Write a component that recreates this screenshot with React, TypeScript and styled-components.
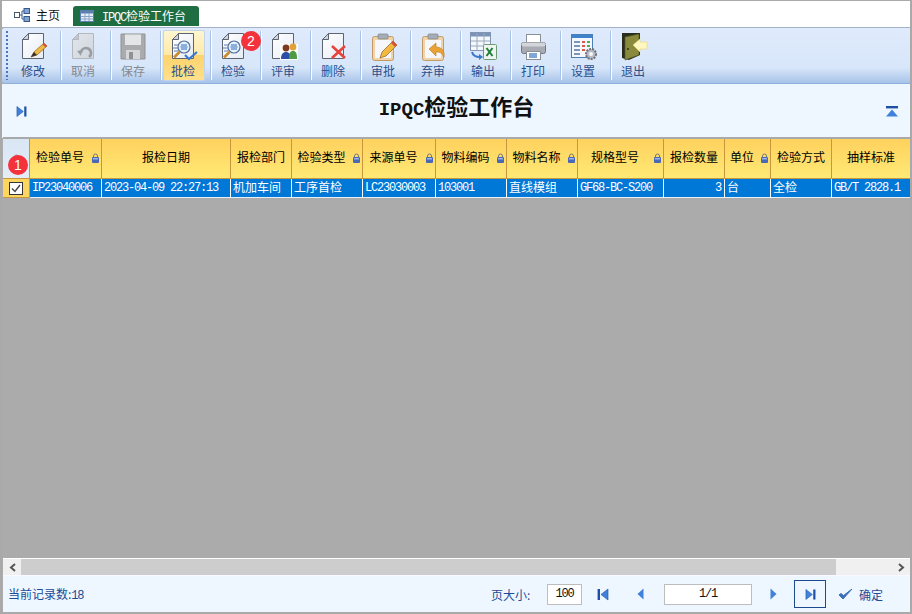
import * as React from "react";
import styled, { createGlobalStyle } from "styled-components";

const GlobalStyle = createGlobalStyle`
  html, body { margin: 0; padding: 0; background: #ababab; }
  body { font-family: "Noto Sans CJK SC", "Liberation Sans", sans-serif; font-size: 12px; }
`;

const Page = styled.div`
  width: 912px;
  height: 614px;
  box-sizing: border-box;
  border: 2px solid #a9a9a9;
  border-bottom-width: 2px;
  border-top-width: 1px;
  display: flex;
  flex-direction: column;
  position: relative;
  background: #ababab;
  overflow: hidden;
`;

const TabBar = styled.div`
  height: 26px;
  background: #fff;
  display: flex;
  align-items: flex-end;
  padding-left: 10px;
  flex: none;
`;

const Tab = styled.div<{ $active?: boolean }>`
  height: ${(p) => (p.$active ? "20px" : "24px")};
  width: ${(p) => (p.$active ? "126px" : "59px")};
  margin-right: 2px;
  margin-bottom: ${(p) => (p.$active ? "1px" : "0")};
  box-sizing: border-box;
  padding-left: ${(p) => (p.$active ? "7px" : "2px")};
  padding-bottom: 1px;
  display: flex;
  align-items: center;
  gap: ${(p) => (p.$active ? "8px" : "6px")};
  color: ${(p) => (p.$active ? "#fff" : "#111")};
  background: ${(p) => (p.$active ? "#1e6e42" : "#fff")};
  border-radius: 3px 3px 0 0;
`;

/* latin text of the original is a 6px-per-char bitmap face */
const Latin = styled.span`
  font-family: "Liberation Mono", monospace;
  font-size: 12px;
  letter-spacing: -1.2px;
`;

const Toolbar = styled.div`
  height: 57px;
  flex: none;
  display: flex;
  align-items: stretch;
  padding-left: 2px;
  box-sizing: border-box;
  border-top: 1px solid #a4b4c8;
  border-bottom: 1px solid #8fb0dc;
  background: linear-gradient(to bottom, #dfebfc 0%, #d8e6fa 72%, #bcd2f0 88%, #a8c4ea 100%);
  border-radius: 3px 0 0 3px;
`;

const Gripper = styled.div`
  width: 2px;
  margin: 3px 5px 3px 2px;
  flex: none;
  background: repeating-linear-gradient(to bottom, #4d76b4 0 2px, transparent 2px 4px);
`;

const ToolButton = styled.div<{ $active?: boolean; $disabled?: boolean }>`
  width: 42px;
  margin: 2px 5px 2px 0;
  padding-right: 2px;
  box-sizing: border-box;
  flex: none;
  display: flex;
  flex-direction: column;
  align-items: center;
  border-radius: 2px;
  color: ${(p) => (p.$disabled ? "#85898f" : "#2a4f8c")};
  border: 1px solid ${(p) => (p.$active ? "#c4d4e8" : "transparent")};
  background: ${(p) =>
    p.$active
      ? "linear-gradient(to bottom, #fff6d0 0%, #ffe9a8 48%, #fdd36c 50%, #ffe08c 100%)"
      : "transparent"};
  svg { display: block; margin-top: 1px; flex: none; }
`;

const ToolLabel = styled.span`
  margin-top: 2px;
  line-height: 14px;
  font-size: 12px;
  white-space: nowrap;
`;

const ToolSep = styled.div`
  width: 2px;
  margin: 3px 1px 3px 0;
  flex: none;
  background: linear-gradient(to right, #a6c2e6 50%, #ffffff 50%);
`;

const TitlePanel = styled.div`
  height: 54px;
  flex: none;
  background: #eef7ff;
  display: flex;
  align-items: center;
  justify-content: space-between;
  padding: 0 12px 0 14px;
`;

const Title = styled.div`
  font-family: "Noto Sans CJK SC", sans-serif;
  font-weight: 700;
  font-size: 22px;
  line-height: 26px;
  color: #111;
  margin-top: -7px;
  white-space: nowrap;
`;

const TitleLatin = styled.span`
  font-family: "Liberation Mono", monospace;
  font-size: 19px;
`;

const Grid = styled.div`
  display: grid;
  grid-template-columns: 27px 72px 129px 61px 71px 73px 71px 71px 86px 61px 46px 61px 79px;
  flex: none;
  margin-left: 1px;
  background: #ababab;
  border-top: 2px solid #a9a9a9;
  margin-top: -1px;
`;

const Corner = styled.div`
  height: 40px;
  box-sizing: border-box;
  background: linear-gradient(to bottom, #d9e6f4, #e4edf8);
  border-right: 1px solid #c8963c;
  border-bottom: 1px solid #c8963c;
  display: flex;
  align-items: center;
  justify-content: center;
`;

const HeadCell = styled.div<{ $locked?: boolean }>`
  height: 40px;
  box-sizing: border-box;
  position: relative;
  display: flex;
  align-items: center;
  justify-content: center;
  padding-right: ${(p) => (p.$locked ? "11px" : "0")};
  padding-bottom: 5px;
  color: #000;
  white-space: nowrap;
  background: linear-gradient(to bottom, #ffd15e, #ffe975);
  border-right: 1px solid #c8963c;
  border-bottom: 1px solid #c8963c;
`;

const LockMark = styled.span`
  position: absolute;
  right: 2px;
  top: 14px;
  line-height: 0;
`;

const RowHead = styled.div`
  height: 19px;
  box-sizing: border-box;
  background: #fdd65f;
  border-right: 1px solid #c8963c;
  border-bottom: 1px solid #c8963c;
  display: flex;
  align-items: center;
  padding-left: 6px;
`;

const Check = styled.div`
  width: 14px;
  height: 13px;
  box-sizing: border-box;
  border: 1px solid #333;
  background: #fff;
  line-height: 0;
`;

const Cell = styled.div<{ $latin?: boolean; $right?: boolean }>`
  height: 19px;
  box-sizing: border-box;
  padding: 0 3px ${(p) => (p.$latin ? "1px" : "3px")} 2px;
  display: flex;
  align-items: center;
  justify-content: ${(p) => (p.$right ? "flex-end" : "flex-start")};
  overflow: hidden;
  white-space: pre;
  color: #fff;
  background: #0078d7;
  border-right: 1px solid #fff;
  border-bottom: 1px solid #e6eef6;
  font-family: ${(p) =>
    p.$latin ? '"Liberation Mono", monospace' : '"Noto Sans CJK SC", sans-serif'};
  font-size: 12px;
  letter-spacing: ${(p) => (p.$latin ? "-1.2px" : "0")};
`;

const Empty = styled.div`
  flex: 1;
  background: #ababab;
`;

const ScrollBar = styled.div`
  height: 16px;
  flex: none;
  display: flex;
  background: #f0f0f0;
  border-top: 1px solid #fff;
  margin-left: 1px;
`;

const ScrollArrow = styled.div`
  width: 18px;
  flex: none;
  display: flex;
  align-items: center;
  justify-content: center;
`;

const ScrollThumb = styled.div`
  width: 815px;
  background: #cdcdcd;
`;

const ScrollTrack = styled.div`
  flex: 1;
`;

const Footer = styled.div`
  height: 36px;
  flex: none;
  margin-left: 1px;
  border-top: 1px solid #f7fbff;
  background: #eef7ff;
  display: flex;
  align-items: center;
  padding-left: 5px;
  color: #1f4a96;
`;

const Count = styled.div`
  width: 483px;
  flex: none;
  white-space: nowrap;
`;

const PagerLabel = styled.div`
  width: 56px;
  flex: none;
  white-space: nowrap;
`;

const PagerInput = styled.div<{ $width: number; $gap?: number }>`
  width: ${(p) => p.$width}px;
  height: 21px;
  margin-left: ${(p) => p.$gap ?? 0}px;
  box-sizing: border-box;
  flex: none;
  background: #fff;
  border: 1px solid #bdbdbd;
  color: #111;
  display: flex;
  align-items: center;
  justify-content: center;
  padding-bottom: 1px;
`;

const PagerButton = styled.div<{ $width: number; $boxed?: boolean }>`
  width: ${(p) => p.$width}px;
  height: 28px;
  flex: none;
  box-sizing: border-box;
  display: flex;
  align-items: center;
  justify-content: center;
  border: 1px solid ${(p) => (p.$boxed ? "#1c4a8c" : "transparent")};
  svg { display: block; }
`;

const Confirm = styled.div`
  display: flex;
  align-items: center;
  gap: 6px;
  margin-left: 12px;
  color: #1f4a96;
`;

const Badge = styled.div<{ $left: number; $top: number }>`
  position: absolute;
  left: ${(p) => p.$left}px;
  top: ${(p) => p.$top}px;
  width: 20px;
  height: 20px;
  border-radius: 50%;
  background: #f4323c;
  color: #fff;
  font-family: "Liberation Sans", sans-serif;
  font-size: 14px;
  display: flex;
  align-items: center;
  justify-content: center;
`;

/* ---- drawings ---- */

const Doc = ({ children, muted }: { children?: React.ReactNode; muted?: boolean }) => (
  <svg width="32" height="30" viewBox="0 0 32 30">
    <defs>
      <linearGradient id={muted ? "docM" : "doc"} x1="0" y1="0" x2="1" y2="1">
        <stop offset="0" stopColor={muted ? "#e2e6ec" : "#ffffff"} />
        <stop offset="1" stopColor={muted ? "#d0d6de" : "#e6ecf4"} />
      </linearGradient>
    </defs>
    <path
      d="M11.5 1.5H26.5V26.5H5.5V7.5Z"
      fill={`url(#${muted ? "docM" : "doc"})`}
      stroke={muted ? "#b4b8be" : "#5d6470"}
    />
    <path d="M5.5 7.5H11.5V1.5Z" fill={muted ? "#c4c8ce" : "#cfd4dc"} stroke={muted ? "#b4b8be" : "#5d6470"} />
    {children}
  </svg>
);

const Pencil = () => (
  <g>
    <path d="M14 25L17 20L27 11L30 14L20 23Z" fill="#f1b93f" stroke="#8a5f1f" strokeWidth="0.7" />
    <path d="M27 11L30 14L28.5 15.5L25.5 12.5Z" fill="#d8533f" />
    <path d="M14 25L17 20L20 23Z" fill="#333" />
  </g>
);

const Magnifier = () => (
  <g>
    <path d="M7 13h4M6 16h5M7 19h4" stroke="#5a7db0" strokeWidth="1" />
    <circle cx="17" cy="15" r="6" fill="#e6f1fb" stroke="#55709a" strokeWidth="1.2" />
    <path d="M14 13h6M13.5 15h7M14 17h6" stroke="#2e6fbe" strokeWidth="1" />
    <path d="M12.5 20L7 25.5" stroke="#c98a2c" strokeWidth="2.6" />
  </g>
);

const DocPencil = () => <Doc><Pencil /></Doc>;

const UndoDoc = () => (
  <Doc muted>
    <path d="M14 21a5 5 0 1 1 8 4" fill="none" stroke="#9a9ea4" strokeWidth="2.6" />
    <path d="M10 19l5-1-1 6Z" fill="#9a9ea4" />
  </Doc>
);

const Disk = () => (
  <svg width="32" height="30" viewBox="0 0 32 30">
    <path d="M4 2H28V27H4Z" fill="#a9abad" stroke="#8f9194" />
    <path d="M8 2.5H24V13H8Z" fill="#e4e5e7" />
    <path d="M9 18H23V27H9Z" fill="#d6d7d9" />
    <path d="M12 20H16V27H12Z" fill="#8f9194" />
  </svg>
);

const ApproveCheck = () => (
  <Doc>
    <Magnifier />
    <path d="M18 23l4 4 8-7" fill="none" stroke="#3c78d0" strokeWidth="2.2" />
  </Doc>
);

const Inspect = () => <Doc><Magnifier /></Doc>;

const People = () => (
  <Doc>
    <rect x="13" y="12" width="18" height="16" fill="#fff" />
    <circle cx="19" cy="16" r="3.4" fill="#7d3a1e" />
    <path d="M14 27c0-5 2-7 5-7s5 2 5 7Z" fill="#2b4fa8" />
    <circle cx="26" cy="15" r="3.4" fill="#e0a13a" />
    <path d="M22 27c0-6 1-8 4-8s4 2 4 8Z" fill="#4f9a44" />
  </Doc>
);

const DocDelete = () => (
  <Doc>
    <path d="M15 14l13 12M28 14L15 26" stroke="#e5443a" strokeWidth="2.6" />
  </Doc>
);

const Clipboard = ({ children }: { children: React.ReactNode }) => (
  <svg width="32" height="30" viewBox="0 0 32 30">
    <rect x="5.5" y="4.5" width="21" height="24" rx="2" fill="#f0d3a8" stroke="#c39a66" />
    <rect x="8" y="8" width="16" height="18" fill="#f6f7fa" />
    <rect x="11" y="2" width="10" height="5" rx="1" fill="#a7adb5" stroke="#7c838c" strokeWidth="0.7" />
    {children}
  </svg>
);

const ClipApprove = () => (
  <Clipboard>
    <path d="M13 26L15 20L26 9L30 13L19 24Z" fill="#f1b93f" stroke="#8a5f1f" strokeWidth="0.7" />
    <path d="M26 9L30 13L28 15L24 11Z" fill="#d8533f" />
  </Clipboard>
);

const ClipReturn = () => (
  <Clipboard>
    <path d="M12 17l7-6v4c6 0 9 4 8 10-2-4-4-5-8-5v4Z" fill="#eba234" stroke="#b87a20" strokeWidth="0.6" />
  </Clipboard>
);

const ExcelTable = () => (
  <svg width="32" height="30" viewBox="0 0 32 30">
    <rect x="3.5" y="0.5" width="20" height="18" fill="#f4f7fb" stroke="#8496b0" />
    <rect x="3.5" y="0.5" width="20" height="4" fill="#7b93b8" />
    <path d="M10 1v17M17 1v17M4 9h19M4 14h19" stroke="#9aa8bc" />
    <rect x="16.5" y="12.5" width="13" height="15" rx="1" fill="#eef5ee" stroke="#6f9a78" />
    <path d="M19.5 16l6 8M25.5 16l-6 8" stroke="#1f7d3a" strokeWidth="2" />
    <path d="M5 20c1 4 4 5 8 5" fill="none" stroke="#3a78c9" strokeWidth="2" />
    <path d="M12 22l4 3-4 3Z" fill="#3a78c9" />
  </svg>
);

const Printer = () => (
  <svg width="32" height="30" viewBox="0 0 32 30">
    <rect x="9.5" y="2.5" width="14" height="9" fill="#fff" stroke="#8b9096" />
    <rect x="4.5" y="10.5" width="24" height="11" rx="2" fill="#a8acb2" stroke="#73777d" />
    <rect x="4.5" y="10.5" width="24" height="4" rx="2" fill="#d2d5d9" />
    <rect x="9.5" y="19.5" width="14" height="8" fill="#fff" stroke="#8b9096" />
    <rect x="12" y="21" width="8" height="5" fill="#7fa8d8" />
  </svg>
);

const Settings = () => (
  <svg width="32" height="30" viewBox="0 0 32 30">
    <rect x="4.5" y="2.5" width="21" height="23" fill="#f4f7fc" stroke="#4c7fb8" />
    <rect x="5" y="3" width="20" height="3" fill="#3f83cc" />
    <path d="M7 10h6M7 14h6M7 18h6M7 22h6" stroke="#7c96b8" strokeWidth="2" />
    <path d="M15 10h3M15 14h3M15 18h3" stroke="#d8584a" strokeWidth="2" />
    <path d="M20 10h3M20 14h3" stroke="#5aa84e" strokeWidth="2" />
    <circle cx="24" cy="22" r="5" fill="#b8bcc2" stroke="#6d7178" strokeWidth="2" strokeDasharray="2 1" />
    <circle cx="24" cy="22" r="2" fill="#f4f7fc" />
  </svg>
);

const ExitDoor = () => (
  <svg width="32" height="30" viewBox="0 0 32 30">
    <path d="M5 1H23V23L12 28L5 26Z" fill="#2a2c1e" />
    <path d="M8 5L22 2V23L8 28Z" fill="#8a8a3c" stroke="#55562a" strokeWidth="0.7" />
    <circle cx="11" cy="17" r="1" fill="#2a2c1e" />
    <path d="M16 13l7-6v3h7v7h-7v3Z" fill="#fff6c0" stroke="#e8d678" strokeWidth="0.6" />
  </svg>
);

const Lock = ({ faded }: { faded?: boolean }) => (
  <svg width="7" height="10" viewBox="0 0 7 10">
    <path d="M1.500 4.500V3a2 2 0 0 1 4 0v1.500" fill="none" stroke={faded ? "#8a8f96" : "#7a7a6a"} />
    <rect x="0" y="4" width="7" height="6" rx="1" fill={faded ? "#9aa0aa" : "#4a68b8"} />
    <rect x="1" y="5" width="5" height="1.500" fill={faded ? "#c0c4cc" : "#9bb3e6"} />
  </svg>
);

const BLUE = "#3f82dc";

const LastPage = () => (
  <svg width="11" height="13" viewBox="0 0 12 13">
    <path d="M1 1L8 6.500L1 12Z" fill={BLUE} stroke="#1d4fa6" strokeWidth="0.6" />
    <rect x="9" y="1" width="2.400" height="11" fill="#1d4fa6" />
  </svg>
);

const FirstPage = () => (
  <svg width="12" height="13" viewBox="0 0 12 13">
    <rect x="0.600" y="1" width="2.400" height="11" fill="#1d4fa6" />
    <path d="M11 1L4 6.500L11 12Z" fill={BLUE} stroke="#1d4fa6" strokeWidth="0.6" />
  </svg>
);

const Prev = () => (
  <svg width="7" height="12" viewBox="0 0 7 12">
    <path d="M6.500 0.500L0.500 6L6.500 11.500Z" fill={BLUE} />
  </svg>
);

const Next = () => (
  <svg width="7" height="12" viewBox="0 0 7 12">
    <path d="M0.500 0.500L6.500 6L0.500 11.500Z" fill={BLUE} />
  </svg>
);

const CollapseTop = () => (
  <svg width="12" height="11" viewBox="0 0 12 11">
    <rect x="0" y="0" width="12" height="2.400" fill="#1d4fa6" />
    <path d="M6 3.500L12 10.500H0Z" fill={BLUE} />
  </svg>
);

const HomeIcon = () => (
  <svg width="16" height="14" viewBox="0 0 16 14">
    <rect x="0.500" y="4.500" width="5" height="5" fill="#fff" stroke="#456" />
    <rect x="10" y="0.500" width="5.500" height="5" fill="#7fa4d2" stroke="#345a8c" />
    <rect x="10" y="8.500" width="5.500" height="5" fill="#7fa4d2" stroke="#345a8c" />
    <path d="M6 7h2M8 3v8M8 3h2M8 11h2" stroke="#345a8c" />
  </svg>
);

const TableIcon = () => (
  <svg width="14" height="12" viewBox="0 0 14 12">
    <rect x="0.500" y="0.500" width="13" height="11" fill="#e6eefa" stroke="#5b7fae" />
    <rect x="0.500" y="0.500" width="13" height="3" fill="#5b7fae" />
    <path d="M5 3v8M9 3v8M1 6.500h12M1 9h12" stroke="#8aa4c8" />
  </svg>
);

const Chevron = ({ right }: { right?: boolean }) => (
  <svg width="7" height="9" viewBox="0 0 7 9">
    <path
      d={right ? "M1 1l4 3.500-4 3.500" : "M6 1L2 4.500 6 8"}
      fill="none"
      stroke="#555"
      strokeWidth="2"
    />
  </svg>
);

const TOOLS = [
  { label: "修改", icon: <DocPencil /> },
  { label: "取消", icon: <UndoDoc />, disabled: true },
  { label: "保存", icon: <Disk />, disabled: true },
  { label: "批检", icon: <ApproveCheck />, active: true },
  { label: "检验", icon: <Inspect /> },
  { label: "评审", icon: <People /> },
  { label: "删除", icon: <DocDelete /> },
  { label: "审批", icon: <ClipApprove /> },
  { label: "弃审", icon: <ClipReturn /> },
  { label: "输出", icon: <ExcelTable /> },
  { label: "打印", icon: <Printer /> },
  { label: "设置", icon: <Settings /> },
  { label: "退出", icon: <ExitDoor /> },
];

const COLUMNS = [
  { title: "检验单号", locked: true, value: "IP23040006", latin: true },
  { title: "报检日期", value: "2023-04-09 22:27:13", latin: true },
  { title: "报检部门", value: "机加车间" },
  { title: "检验类型", locked: true, value: "工序首检" },
  { title: "来源单号", locked: true, value: "LC23030003", latin: true },
  { title: "物料编码", locked: true, value: "103001", latin: true },
  { title: "物料名称", locked: true, value: "直线模组" },
  { title: "规格型号", locked: true, value: "GF68-BC-S200", latin: true },
  { title: "报检数量", value: "3", latin: true, right: true },
  { title: "单位", locked: true, value: "台" },
  { title: "检验方式", value: "全检" },
  { title: "抽样标准", value: "GB/T 2828.1", latin: true },
];

export default function App() {
  return (
    <Page>
      <GlobalStyle />
      <TabBar>
        <Tab>
          <HomeIcon />
          主页
        </Tab>
        <Tab $active>
          <TableIcon />
          <span>
            <Latin>IPQC</Latin>检验工作台
          </span>
        </Tab>
      </TabBar>

      <Toolbar>
        <Gripper />
        {TOOLS.map((tool, i) => (
          <React.Fragment key={tool.label}>
            {i > 0 && <ToolSep />}
            <ToolButton $active={tool.active} $disabled={tool.disabled}>
              {tool.icon}
              <ToolLabel>{tool.label}</ToolLabel>
            </ToolButton>
          </React.Fragment>
        ))}
      </Toolbar>

      <TitlePanel>
        <LastPage />
        <Title>
          <TitleLatin>IPQC</TitleLatin>检验工作台
        </Title>
        <CollapseTop />
      </TitlePanel>

      <Grid>
        <Corner>
          <Lock faded />
        </Corner>
        {COLUMNS.map((col) => (
          <HeadCell key={col.title} $locked={col.locked}>
            {col.title}
            {col.locked && (
              <LockMark>
                <Lock />
              </LockMark>
            )}
          </HeadCell>
        ))}
        <RowHead>
          <Check>
            <svg width="12" height="11" viewBox="0 0 12 11">
              <path d="M2 5.500l3 3L10 2" fill="none" stroke="#444" strokeWidth="1.4" />
            </svg>
          </Check>
        </RowHead>
        {COLUMNS.map((col) => (
          <Cell key={col.title} $latin={col.latin} $right={col.right}>
            {col.value}
          </Cell>
        ))}
      </Grid>

      <Empty />

      <ScrollBar>
        <ScrollArrow>
          <Chevron />
        </ScrollArrow>
        <ScrollThumb />
        <ScrollTrack />
        <ScrollArrow>
          <Chevron right />
        </ScrollArrow>
      </ScrollBar>

      <Footer>
        <Count>
          当前记录数:<Latin>18</Latin>
        </Count>
        <PagerLabel>页大小:</PagerLabel>
        <PagerInput $width={35}>
          <Latin>100</Latin>
        </PagerInput>
        <PagerButton $width={42}>
          <FirstPage />
        </PagerButton>
        <PagerButton $width={32}>
          <Prev />
        </PagerButton>
        <PagerInput $width={88} $gap={8}>
          <Latin>1/1</Latin>
        </PagerInput>
        <PagerButton $width={42}>
          <Next />
        </PagerButton>
        <PagerButton $width={32} $boxed>
          <LastPage />
        </PagerButton>
        <Confirm>
          <svg width="15" height="13" viewBox="0 0 15 13">
            <path d="M1 7l4 4 9-10-8.500 6.500L3 5.500Z" fill="#3b6fb8" stroke="#3b6fb8" strokeLinejoin="round" />
          </svg>
          确定
        </Confirm>
      </Footer>

      <Badge $left={6} $top={154}>1</Badge>
      <Badge $left={239} $top={30}>2</Badge>
    </Page>
  );
}
